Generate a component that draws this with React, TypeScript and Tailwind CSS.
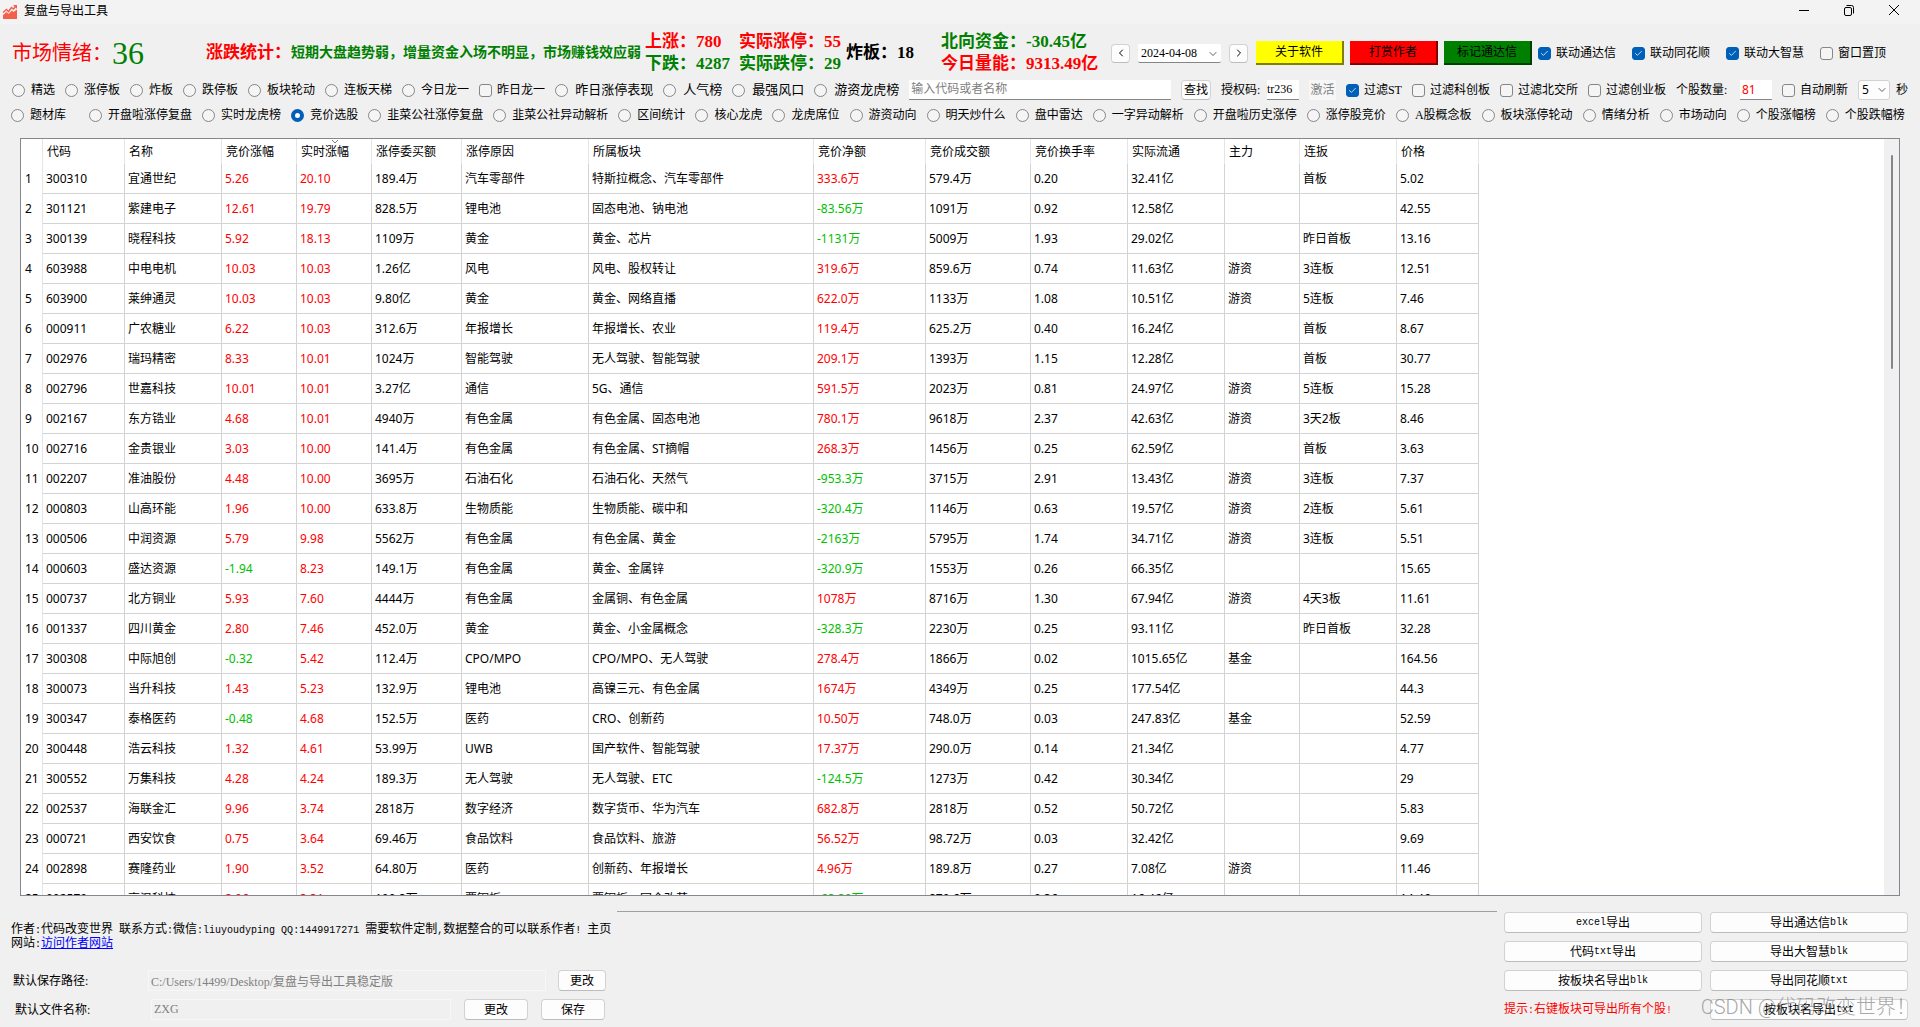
import { ReactNode } from 'react';
import { Check, ChevronDown, ChevronLeft, ChevronRight } from 'lucide-react';

const columns = [
  { title: '代码', width: 'w-[82px]' },
  { title: '名称', width: 'w-[97px]' },
  { title: '竞价涨幅', width: 'w-[75px]' },
  { title: '实时涨幅', width: 'w-[75px]', sorted: true },
  { title: '涨停委买额', width: 'w-[90px]' },
  { title: '涨停原因', width: 'w-[127px]' },
  { title: '所属板块', width: 'w-[225px]' },
  { title: '竞价净额', width: 'w-[112px]' },
  { title: '竞价成交额', width: 'w-[105px]' },
  { title: '竞价换手率', width: 'w-[97px]' },
  { title: '实际流通', width: 'w-[97px]' },
  { title: '主力', width: 'w-[75px]' },
  { title: '连扳', width: 'w-[97px]' },
  { title: '价格', width: 'w-[82px]' },
];

// columns whose sign decides the text color
const signedColumns = [2, 3, 7];

const rows = [
  ['300310', '宜通世纪', '5.26', '20.10', '189.4万', '汽车零部件', '特斯拉概念、汽车零部件', '333.6万', '579.4万', '0.20', '32.41亿', '', '首板', '5.02'],
  ['301121', '紫建电子', '12.61', '19.79', '828.5万', '锂电池', '固态电池、钠电池', '-83.56万', '1091万', '0.92', '12.58亿', '', '', '42.55'],
  ['300139', '晓程科技', '5.92', '18.13', '1109万', '黄金', '黄金、芯片', '-1131万', '5009万', '1.93', '29.02亿', '', '昨日首板', '13.16'],
  ['603988', '中电电机', '10.03', '10.03', '1.26亿', '风电', '风电、股权转让', '319.6万', '859.6万', '0.74', '11.63亿', '游资', '3连板', '12.51'],
  ['603900', '莱绅通灵', '10.03', '10.03', '9.80亿', '黄金', '黄金、网络直播', '622.0万', '1133万', '1.08', '10.51亿', '游资', '5连板', '7.46'],
  ['000911', '广农糖业', '6.22', '10.03', '312.6万', '年报增长', '年报增长、农业', '119.4万', '625.2万', '0.40', '16.24亿', '', '首板', '8.67'],
  ['002976', '瑞玛精密', '8.33', '10.01', '1024万', '智能驾驶', '无人驾驶、智能驾驶', '209.1万', '1393万', '1.15', '12.28亿', '', '首板', '30.77'],
  ['002796', '世嘉科技', '10.01', '10.01', '3.27亿', '通信', '5G、通信', '591.5万', '2023万', '0.81', '24.97亿', '游资', '5连板', '15.28'],
  ['002167', '东方锆业', '4.68', '10.01', '4940万', '有色金属', '有色金属、固态电池', '780.1万', '9618万', '2.37', '42.63亿', '游资', '3天2板', '8.46'],
  ['002716', '金贵银业', '3.03', '10.00', '141.4万', '有色金属', '有色金属、ST摘帽', '268.3万', '1456万', '0.25', '62.59亿', '', '首板', '3.63'],
  ['002207', '准油股份', '4.48', '10.00', '3695万', '石油石化', '石油石化、天然气', '-953.3万', '3715万', '2.91', '13.43亿', '游资', '3连板', '7.37'],
  ['000803', '山高环能', '1.96', '10.00', '633.8万', '生物质能', '生物质能、碳中和', '-320.4万', '1146万', '0.63', '19.57亿', '游资', '2连板', '5.61'],
  ['000506', '中润资源', '5.79', '9.98', '5562万', '有色金属', '有色金属、黄金', '-2163万', '5795万', '1.74', '34.71亿', '游资', '3连板', '5.51'],
  ['000603', '盛达资源', '-1.94', '8.23', '149.1万', '有色金属', '黄金、金属锌', '-320.9万', '1553万', '0.26', '66.35亿', '', '', '15.65'],
  ['000737', '北方铜业', '5.93', '7.60', '4444万', '有色金属', '金属铜、有色金属', '1078万', '8716万', '1.30', '67.94亿', '游资', '4天3板', '11.61'],
  ['001337', '四川黄金', '2.80', '7.46', '452.0万', '黄金', '黄金、小金属概念', '-328.3万', '2230万', '0.25', '93.11亿', '', '昨日首板', '32.28'],
  ['300308', '中际旭创', '-0.32', '5.42', '112.4万', 'CPO/MPO', 'CPO/MPO、无人驾驶', '278.4万', '1866万', '0.02', '1015.65亿', '基金', '', '164.56'],
  ['300073', '当升科技', '1.43', '5.23', '132.9万', '锂电池', '高镍三元、有色金属', '1674万', '4349万', '0.25', '177.54亿', '', '', '44.3'],
  ['300347', '泰格医药', '-0.48', '4.68', '152.5万', '医药', 'CRO、创新药', '10.50万', '748.0万', '0.03', '247.83亿', '基金', '', '52.59'],
  ['300448', '浩云科技', '1.32', '4.61', '53.99万', 'UWB', '国产软件、智能驾驶', '17.37万', '290.0万', '0.14', '21.34亿', '', '', '4.77'],
  ['300552', '万集科技', '4.28', '4.24', '189.3万', '无人驾驶', '无人驾驶、ETC', '-124.5万', '1273万', '0.42', '30.34亿', '', '', '29'],
  ['002537', '海联金汇', '9.96', '3.74', '2818万', '数字经济', '数字货币、华为汽车', '682.8万', '2818万', '0.52', '50.72亿', '', '', '5.83'],
  ['000721', '西安饮食', '0.75', '3.64', '69.46万', '食品饮料', '食品饮料、旅游', '56.52万', '98.72万', '0.03', '32.42亿', '', '', '9.69'],
  ['002898', '赛隆药业', '1.90', '3.52', '64.80万', '医药', '创新药、年报增长', '4.96万', '189.8万', '0.27', '7.08亿', '游资', '', '11.46'],
  ['002579', '高温科技', '2.06', '3.31', '100.8万', '覆铜板', '覆铜板、国企改革', '-62.20万', '870.6万', '0.36', '16.46亿', '', '', '14.46'],
];

const views = [
  '开盘啦涨停复盘', '实时龙虎榜', '竞价选股', '韭菜公社涨停复盘', '韭菜公社异动解析', '区间统计',
  '核心龙虎', '龙虎席位', '游资动向', '明天炒什么', '盘中雷达', '一字异动解析', '开盘啦历史涨停',
  '涨停股竞价', 'A股概念板', '板块涨停轮动', '情绪分析', '市场动向', '个股涨幅榜', '个股跌幅榜',
];

const Radio = ({ label, checked, large }: { label: string; checked?: boolean; large?: boolean }) => (
  <label className={`flex shrink-0 items-center whitespace-nowrap ${large ? 'gap-[7px] text-[13px]' : 'gap-[6px]'}`}>
    <input
      type="radio"
      name="view"
      defaultChecked={checked}
      className="size-[13px] shrink-0 appearance-none rounded-full border border-[#868686] bg-[#f5f5f5] checked:border-4 checked:border-[#005fb8] checked:bg-white"
    />
    {label}
  </label>
);

const Checkbox = ({ children, checked }: { children: ReactNode; checked?: boolean }) => (
  <label className="flex shrink-0 items-center gap-[5px] whitespace-nowrap">
    <span className="grid size-[13px] shrink-0 place-items-center">
      <input
        type="checkbox"
        defaultChecked={checked}
        className="peer col-start-1 row-start-1 size-[13px] appearance-none rounded-[3px] border border-[#868686] bg-[#f5f5f5] checked:border-[#005fb8] checked:bg-[#005fb8]"
      />
      <Check className="pointer-events-none col-start-1 row-start-1 hidden size-[9px] text-white peer-checked:block" strokeWidth={2} />
    </span>
    <span>{children}</span>
  </label>
);

const PushButton = ({ children, className = '', label }: { children: ReactNode; className?: string; label?: string }) => (
  <button
    aria-label={label}
    className={`flex shrink-0 items-center justify-center whitespace-nowrap rounded-[4px] border border-[#d2d2d2] border-b-[#bcbcbc] bg-[#fdfdfd] ${className}`}
  >
    {children}
  </button>
);

const Latin = ({ children }: { children: ReactNode }) => (
  <span className="font-['Liberation_Mono',monospace] text-[10px]">{children}</span>
);

const TitleBar = () => (
  <header className="flex h-6 items-center bg-[#f3f3f3] pl-[2px] pr-5">
    <svg viewBox="0 0 16 16" className="size-4">
      <path d="M1 11 L4.5 8 L6.5 10 L10 6.5 L11.5 8 L15 5.5 V15 H1 Z" fill="#f4604a" />
      <path d="M1 8.5 L4.5 5.5 L6.5 7.5 L9.5 3.5 L11.5 5 L14 2" fill="none" stroke="#f4604a" strokeWidth="1.5" />
      <path d="M11 1 H15 V5 Z" fill="#f4604a" />
    </svg>
    <h1 className="ml-[6px] flex-1 pb-[2px]">复盘与导出工具</h1>
    <div className="flex items-center gap-[33px] pb-1">
      <button aria-label="最小化">
        <svg viewBox="0 0 12 12" className="size-3" fill="none" stroke="#000">
          <path d="M1 6.5 H11" />
        </svg>
      </button>
      <button aria-label="还原">
        <svg viewBox="0 0 12 12" className="size-3" fill="none" stroke="#000">
          <rect x="1.5" y="3.5" width="7" height="8" rx="1.5" />
          <path d="M3.5 1.5 H8.5 A2 2 0 0 1 10.5 3.5 V9.5" />
        </svg>
      </button>
      <button aria-label="关闭">
        <svg viewBox="0 0 12 12" className="size-3" fill="none" stroke="#000">
          <path d="M1 1 L11 11 M11 1 L1 11" />
        </svg>
      </button>
    </div>
  </header>
);

const Summary = () => (
  <section className="mt-[3px] flex h-[52px] items-center whitespace-nowrap pl-3">
    <div className="flex w-[194px] shrink-0 items-center text-[20px]">
      <span className="text-[#ff0000]">市场情绪：</span>
      <span className="text-[32px] leading-8 text-[#008000]">36</span>
    </div>
    <div className="flex w-[439px] shrink-0 items-center font-bold">
      <span className="text-[17px] text-[#ff0000]">涨跌统计：</span>
      <span className="text-[14px] text-[#008000]">短期大盘趋势弱，增量资金入场不明显，市场赚钱效应弱</span>
    </div>
    <div className="grid w-[201px] shrink-0 grid-cols-[94px_107px] text-[17px] font-bold leading-[22px]">
      <span className="text-[#ff0000]">上涨：780</span>
      <span className="text-[#ff0000]">实际涨停：55</span>
      <span className="text-[#008000]">下跌：4287</span>
      <span className="text-[#008000]">实际跌停：29</span>
    </div>
    <div className="w-[95px] shrink-0 text-[17px] font-bold">炸板：18</div>
    <div className="flex w-[170px] shrink-0 flex-col text-[17px] font-bold leading-[22px]">
      <span className="text-[#008000]">北向资金：-30.45亿</span>
      <span className="text-[#ff0000]">今日量能：9313.49亿</span>
    </div>
    <div className="flex shrink-0 items-center gap-2">
      <PushButton className="h-[19px] w-[19px]" label="前一天">
        <ChevronLeft className="size-3" strokeWidth={2} />
      </PushButton>
      <div className="relative">
        <select
          aria-label="日期"
          className="block h-[19px] w-[83px] appearance-none rounded-[2px] border-b border-[#868686] bg-white pl-[3px] leading-[18px]"
        >
          <option>2024-04-08</option>
        </select>
        <ChevronDown className="pointer-events-none absolute right-[2px] top-1 size-3 text-[#606060]" strokeWidth={2} />
      </div>
      <PushButton className="h-[19px] w-[19px]" label="后一天">
        <ChevronRight className="size-3" strokeWidth={2} />
      </PushButton>
    </div>
    <div className="ml-2 flex shrink-0 gap-[6px]">
      <button className="h-6 w-[88px] border-b-2 border-r-2 border-[#7f7f00] bg-[#ffff00]">关于软件</button>
      <button className="h-6 w-[88px] border-b-2 border-r-2 border-[#7f0000] bg-[#ff0000]">打赏作者</button>
      <button className="h-6 w-[88px] border-b-2 border-r-2 border-[#004000] bg-[#008000]">标记通达信</button>
    </div>
    <div className="ml-[6px] flex gap-4">
      <Checkbox checked>联动通达信</Checkbox>
      <Checkbox checked>联动同花顺</Checkbox>
      <Checkbox checked>联动大智慧</Checkbox>
      <Checkbox>窗口置顶</Checkbox>
    </div>
  </section>
);

const FilterBar = () => (
  <section className="mt-px flex h-5 items-center gap-[10px] whitespace-nowrap pl-3 pr-3">
    <Radio label="精选" />
    <Radio label="涨停板" />
    <Radio label="炸板" />
    <Radio label="跌停板" />
    <Radio label="板块轮动" />
    <Radio label="连板天梯" />
    <Radio label="今日龙一" />
    <Checkbox>昨日龙一</Checkbox>
    <Radio label="昨日涨停表现" large />
    <Radio label="人气榜" large />
    <Radio label="最强风口" large />
    <Radio label="游资龙虎榜" large />
    <input
      type="text"
      aria-label="搜索"
      placeholder="输入代码或者名称"
      className="h-5 min-w-0 flex-1 border-b border-[#868686] bg-white pl-[2px] placeholder-[#808080] outline-none"
    />
    <PushButton className="h-5 w-[30px]">查找</PushButton>
    <div className="flex items-center">
      <label htmlFor="license" className="w-[46px]">授权码:</label>
      <input id="license" defaultValue="tr236" className="h-5 w-[32px] border-b border-[#868686] bg-white outline-none" />
    </div>
    <button disabled className="h-5 w-[27px] bg-[#f7f7f7] text-[#808080]">激活</button>
    <Checkbox checked>过滤ST</Checkbox>
    <Checkbox>过滤科创板</Checkbox>
    <Checkbox>过滤北交所</Checkbox>
    <Checkbox>过滤创业板</Checkbox>
    <div className="flex items-center">
      <label htmlFor="count" className="w-[64px]">个股数量:</label>
      <input
        id="count"
        defaultValue="81"
        className="h-5 w-[32px] border-b border-[#868686] bg-white pl-[2px] font-['Noto_Sans',sans-serif] text-[#ff0000] outline-none"
      />
    </div>
    <Checkbox>自动刷新</Checkbox>
    <div className="flex items-center gap-[6px]">
      <div className="relative">
        <select
          aria-label="刷新间隔"
          className="block h-5 w-[32px] appearance-none rounded-[3px] border border-[#d2d2d2] bg-[#fdfdfd] pl-[3px] font-['Noto_Sans',sans-serif] leading-[18px]"
        >
          <option>5</option>
        </select>
        <ChevronDown className="pointer-events-none absolute right-[2px] top-1 size-3 text-[#606060]" strokeWidth={2} />
      </div>
      <span>秒</span>
    </div>
  </section>
);

const ViewBar = () => (
  <section className="mt-[5px] flex h-5 items-center pl-[11px] pr-[15px]">
    <div className="w-[78px] shrink-0">
      <Radio label="题材库" />
    </div>
    <div className="flex flex-1 justify-between">
      {views.map((view) => (
        <Radio key={view} label={view} checked={view === '竞价选股'} />
      ))}
    </div>
  </section>
);

const cellColor = (value: string, index: number) => {
  if (!signedColumns.includes(index)) return '';
  return value.startsWith('-') ? 'text-[#00c000]' : 'text-[#ff0000]';
};

const StockTable = () => (
  <div className="ml-5 mr-5 mt-[13px] flex min-h-0 flex-1 overflow-hidden border border-[#828790] bg-white font-['Noto_Sans','Noto_Sans_CJK_SC',sans-serif]">
    <div className="min-w-0 flex-1 overflow-hidden">
      <table className="w-[1458px] table-fixed border-separate border-spacing-0 text-left">
        <thead>
          <tr className="h-[25px]">
            <th className="w-[22px] border-r border-[#e5e5e5]" />
            {columns.map((column) => (
              <th key={column.title} className={`relative border-r border-[#e5e5e5] pl-1 font-normal leading-4 ${column.width}`}>
                {column.title}
                {column.sorted && (
                  <svg viewBox="0 0 8 5" className="absolute left-[34px] top-0 h-[5px] w-2" fill="none" stroke="#808080">
                    <path d="M1 1 L4 4 L7 1" />
                  </svg>
                )}
              </th>
            ))}
          </tr>
        </thead>
        <tbody>
          {rows.map((row, rowIndex) => (
            <tr key={row[0]} className="h-[30px]">
              <th className="border-r border-[#e5e5e5] pl-1 font-normal leading-4">{rowIndex + 1}</th>
              {row.map((value, index) => (
                <td
                  key={index}
                  className={`whitespace-nowrap border-b border-r border-[#d3d3d3] pl-[3px] leading-4 ${cellColor(value, index)}`}
                >
                  {value}
                </td>
              ))}
            </tr>
          ))}
        </tbody>
      </table>
    </div>
    <div className="flex w-[15px] shrink-0 justify-center bg-[#f0f0f0] pt-4">
      <div className="h-[214px] w-[2px] rounded-full bg-[#868686]" />
    </div>
  </div>
);

const Footer = () => (
  <footer className="flex h-[131px] shrink-0 pr-3">
    <div className="w-[617px] shrink-0 pl-[11px] pt-[27px]">
      <p className="whitespace-nowrap leading-[13px]">
        作者<Latin>:</Latin>代码改变世界<Latin> </Latin>联系方式<Latin>:</Latin>微信<Latin>:liuyoudyping QQ:1449917271 </Latin>
        需要软件定制<Latin>,</Latin>数据整合的可以联系作者<Latin>! </Latin>主页
        <br />
        网站<Latin>:</Latin>
        <a href="#" className="text-[#0000ff] underline">访问作者网站</a>
      </p>
      <div className="mt-[19px] flex items-center">
        <label htmlFor="path" className="w-[137px] pl-[2px]">默认保存路径:</label>
        <input
          id="path"
          disabled
          defaultValue="C:/Users/14499/Desktop/复盘与导出工具稳定版"
          className="h-[21px] w-[398px] border border-[#f7f7f7] bg-[#f0f0f0] pl-[2px] text-[#808080]"
        />
        <PushButton className="ml-3 h-[21px] w-12">更改</PushButton>
      </div>
      <div className="mt-2 flex items-center">
        <label htmlFor="file" className="w-[140px] pl-1">默认文件名称:</label>
        <input id="file" disabled defaultValue="ZXG" className="h-[21px] w-[300px] border border-[#f7f7f7] bg-[#f0f0f0] pl-[2px] text-[#808080]" />
        <PushButton className="ml-[13px] h-[21px] w-16">更改</PushButton>
        <PushButton className="ml-[13px] h-[21px] w-16">保存</PushButton>
      </div>
    </div>
    <div className="mt-[15px] h-px flex-1 bg-[#a0a0a0]" />
    <div className="relative ml-[7px] w-[404px] shrink-0 pt-4">
      <div className="grid grid-cols-2 gap-2">
        <PushButton className="h-[21px]"><Latin>excel</Latin>导出</PushButton>
        <PushButton className="h-[21px]">导出通达信<Latin>blk</Latin></PushButton>
        <PushButton className="h-[21px]">代码<Latin>txt</Latin>导出</PushButton>
        <PushButton className="h-[21px]">导出大智慧<Latin>blk</Latin></PushButton>
        <PushButton className="h-[21px]">按板块名导出<Latin>blk</Latin></PushButton>
        <PushButton className="h-[21px]">导出同花顺<Latin>txt</Latin></PushButton>
        <p className="self-center whitespace-nowrap text-[#ff0000]">
          提示<Latin>:</Latin>右键板块可导出所有个股<Latin>!</Latin>
        </p>
        <PushButton className="h-[21px]">按板块名导出<Latin>txt</Latin></PushButton>
      </div>
      <p className="pointer-events-none absolute -right-2 bottom-2 whitespace-nowrap font-['Roboto','Noto_Sans_CJK_SC',sans-serif] text-[20px] font-light leading-6 text-[#808080]/70">
        CSDN @代码改变世界！
      </p>
    </div>
  </footer>
);

const App = () => {
  return (
    <div className="flex h-screen flex-col overflow-hidden bg-[#f0f0f0] font-['Liberation_Serif','Noto_Sans_CJK_SC',sans-serif] text-[12px] leading-4 text-black">
      <TitleBar />
      <Summary />
      <FilterBar />
      <ViewBar />
      <StockTable />
      <Footer />
    </div>
  );
};

export default App;
